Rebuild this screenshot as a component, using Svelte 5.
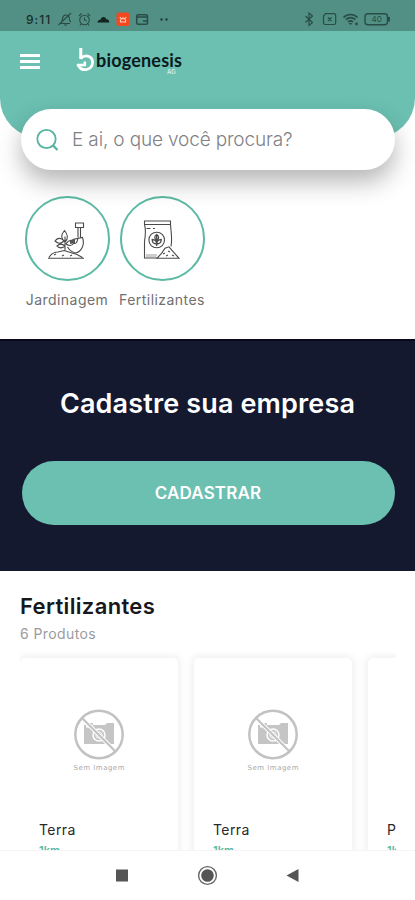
<script>
  const products = [
    { name: 'Terra', distance: '1km' },
    { name: 'Terra', distance: '1km' },
    { name: 'P', distance: '1km' }
  ];
</script>

<div class="screen">
  <header>
    <div class="status">
      <span class="time">9:11</span>
      <svg class="left-icons" width="120" height="20" viewBox="58 10 120 20" fill="none" stroke="#284d47" stroke-width="1.1">
        <path d="M60.5 23.5h9.5M61.5 22c1-1 1-2.500 1.200-4 .3-2 2-3.200 3.500-3 2 .2 3 1.500 3.100 3.200 0 2 .3 3 1.500 4M58.500 25l12.500-12M64 25h3" />
        <circle cx="84.500" cy="20" r="4.800" /><path d="M84.500 17.500V20l2 1M79 16l2.500-2.500M90 16l-2.500-2.500M81 24l-1 1.500M88 24l1 1.500" />
        <path d="M97.500 22.500c.2-2 1.400-3 3-2.800 1-3.600 5-3.300 5.700-.5 1.900-.2 2.900.9 3.100 3.300Z" fill="#13231f" stroke="none" />
        <rect x="116.500" y="12.500" width="13" height="13.500" rx="2.500" fill="#f4481e" stroke="none" />
        <path d="m119.800 17 1.700 2 1.500-1 1.500 1 1.700-2M120.500 19.500v2.500h5v-2.500" stroke="#ffd0c0" />
        <rect x="136.700" y="14.700" width="10.800" height="9.600" rx="1.500" stroke-width="1.500" /><path d="M137 17h10M143 21h4" stroke-width="1.500" />
        <path d="M160.500 19.500h2M165.500 19.500h2" stroke="#172f2a" stroke-width="2" />
      </svg>
      <svg class="right-icons" width="90" height="20" viewBox="302 10 90 20" fill="none" stroke="#284d47" stroke-width="1.200">
        <path d="m305.500 16 7 6.500-3.500 3V13l3.500 3-7 6.500" />
        <path d="M325.500 13.700h8.500q1.700 0 1.700 1.700v7.400q0 1.700-1.700 1.700h-8.800q-1.700 0-1.700-1.700v-6.500ZM328 17.500l3.500 3.500M331.500 17.500l-3.500 3.500" />
        <path d="M343.500 17.500c4-4 10-4 14 0M345.800 19.700c3-2.700 6.600-2.700 9.600 0M348 22c1.500-1.400 3.500-1.400 5 0" stroke-width="1.700" /><path d="m348.500 23 2 2 2-2Z" fill="#284d47" stroke="none" /><circle cx="356.500" cy="24" r=".8" />
        <rect x="365" y="13.700" width="22.500" height="11" rx="3" stroke-width="1.400" /><path d="M389 17v4.500" stroke-width="2" />
        <text x="371.500" y="22.300">40</text>
      </svg>
    </div>
    <div class="bar">
      <div class="menu"><i></i><i></i><i></i></div>
      <div class="logo">
        <svg width="20" height="28" viewBox="76 46 20 28" fill="none" stroke="#fff"><path d="M80.800 48v11" stroke-width="3" /><path d="M80.500 58.500c6-5.500 12.500-1.500 12 4.500-.6 7-10.500 9.500-14 2.500" stroke-width="2.800" /><path d="M76.800 65h8v-3.500" stroke-width="2.600" /></svg>
        <div class="wordmark">
          <span class="brand">biogenesis</span>
          <span class="suffix">AG</span>
        </div>
      </div>
    </div>
  </header>

  <div class="search">
    <svg width="24" height="24" viewBox="0 0 24 24" fill="none" stroke="#55b39f" stroke-width="1.800"><circle cx="10.500" cy="11" r="9.200" /><path d="m17 17.500 4.500 4.500" stroke-width="2.300" /></svg>
    <span>E ai, o que você procura?</span>
  </div>

  <div class="categories">
    <div class="category">
      <div class="circle">
        <svg width="40" height="40" viewBox="48 217 40 40" fill="none" stroke="#4a4a4a" stroke-width="1.100">
          <path d="M49 256.200h36M50 255.500c2-3.500 5-5.500 9-5.500l6-1.500 8 2.500 5 1.500 5.500 3M55 253l2-1M63 254l2-1M71 254l2-1" />
          <path d="M66 248.500v-14M66 240c-4-3-4.500-7-.5-11.500 3.500 4 4 8.500.5 11.500M66 244c-3 2.500-6 2-8 0 2-2 5-2.500 8 0M65 239c-3-4-7-3-9 0 3 3 6 3 9 0M67 242c3-5 7-4 8-1-2 3-5 3-8 1" />
          <path d="M76.500 221h8v4.500h-8ZM79 225.500v10M81.500 225.500v10M73.500 237.500l10-2c2.500 7-1 14.500-7 15.500-4-1-6.500-3.500-8-6M79 236c-1 6-3 6-5 5" />
          <path d="M71 238l5-1v4l-5 1Z" fill="#555" stroke="none" />
        </svg>
      </div>
      <span class="c1">Jardinagem</span>
    </div>
    <div class="category">
      <div class="circle">
        <svg width="40" height="40" viewBox="143 217 40 40" fill="none" stroke="#4a4a4a" stroke-width="1.100">
          <path d="M145.500 219h26v3.500h-26ZM145.500 222.500c1.500 5 1 11 0 17v16.500h13M171.500 222.500c.5 8 2 14 .5 22M147.500 226.500h4M154 226.500h2" />
          <circle cx="157.700" cy="238" r="7.800" />
          <path d="M157.700 244v-11M157.700 238c-2.500-1-2.500-4 0-5.500 2.500 1.500 2.500 4.500 0 5.500M157.700 242c-2.500 0-4.500-1.500-4.500-4.500 2.500 0 4.500 2 4.500 4.500M157.700 242c2.500 0 4.500-1.500 4.500-4.500-2.500 0-4.500 2-4.500 4.500" stroke-width="1.300" />
          <path d="M158 256.300h22l-7-8-3-3.500-4 1.500-3.500 5ZM164 252l2-1M169 249l2 1M167 254l2-1M173 253l2 1" /><path d="M147 253h11M147 255h10" stroke="#999" />
        </svg>
      </div>
      <span class="c2">Fertilizantes</span>
    </div>
  </div>

  <section class="banner">
    <h1>Cadastre sua empresa</h1>
    <button>CADASTRAR</button>
  </section>

  <section class="products">
    <h2>Fertilizantes</h2>
    <p>6 Produtos</p>
    <div class="carousel">
      {#each products as product}
        <article>
          <svg class="photo" width="52" height="64" viewBox="0 0 52 64">
            <path d="M11 17h3v-2h6v2h12l2-2h7v21H11Z" fill="#c5c5c5" />
            <path d="M13 18.500h7" stroke="#fff" stroke-width="2" />
            <circle cx="26" cy="27" r="6" fill="#c5c5c5" stroke="#fff" stroke-width="1.500" /><circle cx="26" cy="27" r="3.200" fill="none" stroke="#f4f4f4" />
            <path d="m10.500 11.500 31 31" stroke="#fff" stroke-width="4" /><path d="m9 10 34 34" stroke="#c2c2c2" stroke-width="2.200" />
            <circle cx="26" cy="26.500" r="23.700" fill="none" stroke="#c2c2c2" stroke-width="2.500" />
            <text x="0.500" y="62" textLength="51">Sem Imagem</text>
          </svg>
          <div class="name">{product.name}</div>
          <div class="distance">{product.distance}</div>
        </article>
      {/each}
    </div>
  </section>

  <nav>
    <svg width="415" height="49" viewBox="0 851 415 49">
      <rect x="116" y="869.500" width="12" height="12" fill="#555" />
      <circle cx="207.500" cy="875.500" r="8.900" fill="none" stroke="#666" stroke-width="1.400" /><circle cx="207.500" cy="875.500" r="6.300" fill="#555" />
      <path d="m286.500 875.500 12-6.500v13Z" fill="#555" />
    </svg>
  </nav>
</div>

<style>
  :global(body) { margin: 0; background: #fff; }
  .screen { width: 415px; height: 900px; overflow: hidden; display: flex; flex-direction: column; background: #fff; font-family: Inter, 'Liberation Sans', sans-serif; }
  header { height: 138px; flex: none; background: #6bc0b1; border-radius: 0 0 40px 40px; }
  .status { height: 31px; display: flex; align-items: center; padding: 8px 23px 0 26px; box-sizing: border-box; background: #528f84; }
  .time { font-size: 12px; font-weight: 500; letter-spacing: 1px; width: 32px; color: #172f2a; white-space: nowrap; }
  .right-icons { margin-left: auto; }
  .right-icons text { font-size: 8px; font-family: Inter, sans-serif; fill: #284d47; stroke: none; }
  .bar { display: flex; align-items: flex-start; padding: 15px 20px 0; }
  .menu { width: 20px; display: flex; flex-direction: column; gap: 3.500px; margin-top: 8px; }
  .menu i { height: 2.500px; background: #fff; }
  .logo { margin-left: 36px; display: flex; }
  .wordmark { display: flex; flex-direction: column; padding-top: 5px; }
  .brand { font: 700 18px/19px Lato, sans-serif; letter-spacing: .2px; color: #0c1b20; }
  .suffix { margin: -1px 0 0 71px; font-size: 6px; line-height: 6px; font-weight: 600; color: #d3eee8; }
  .search { position: relative; flex: none; width: 374px; height: 61px; margin: -29px 0 0 21px; padding-left: 15px; box-sizing: border-box; border-radius: 31px; background: #fff; box-shadow: 0 12px 24px rgba(0,0,0,.29); display: flex; align-items: center; gap: 12px; color: #818185; font-size: 19px; white-space: nowrap; }
  .search span { font-weight: 300; letter-spacing: -.15px; }
  .categories { display: flex; gap: 11px; padding: 26px 25px 0; height: 143px; flex: none; }
  .category { width: 84px; display: flex; flex-direction: column; align-items: center; }
  .circle { width: 85px; height: 85px; box-sizing: border-box; border: 2px solid #5cb9a4; border-radius: 50%; display: grid; place-items: center; }
  .category span { font-size: 14px; line-height: 18px; margin-top: 10px; color: #707070; white-space: nowrap; }
  .category .c1 { letter-spacing: .45px; }
  .category .c2 { letter-spacing: .45px; }
  .banner { height: 232px; box-sizing: border-box; flex: none; background: #14192f; border-top: 2px solid #080a1c; display: flex; flex-direction: column; align-items: center; }
  h1 { margin: 46px 0 0; font-size: 27px; line-height: 34px; font-weight: 600; letter-spacing: .15px; color: #fff; white-space: nowrap; }
  button { margin: 40px 0 0 1px; width: 373px; height: 64px; border: 0; border-radius: 32px; background: #6bc0b1; color: #fff; font: 600 17px Inter, sans-serif; letter-spacing: .15px; padding: 0; }
  .products { padding: 22px 19px 0 20px; height: 280px; box-sizing: border-box; flex: none; }
  h2 { margin: 0; font-size: 22px; line-height: 27px; font-weight: 600; letter-spacing: .35px; color: #18181c; white-space: nowrap; }
  p { margin: 5px 0 0; font-size: 14px; line-height: 18px; letter-spacing: .4px; color: #9b9b9f; }
  .carousel { margin-top: 9px; height: 199px; padding-top: 6px; box-sizing: border-box; overflow: hidden; display: flex; gap: 16px; }
  article { flex: none; width: 158px; height: 250px; border-radius: 5px; background: #fff; box-shadow: 0 0 8px 2px rgba(0,0,0,.065); box-sizing: border-box; padding: 50px 19px 0; }
  .photo { display: block; margin: 0 auto; }
  .photo text { font-family: 'DejaVu Sans', sans-serif; font-size: 7px; fill: #aaa; }
  .name { margin-top: 49px; font-size: 14px; line-height: 18px; letter-spacing: .4px; color: #29292b; }
  .distance { margin-top: 4px; font-size: 11px; line-height: 14px; font-weight: 600; color: #56b6a1; }
  nav { height: 49px; background: #fff; box-shadow: 0 -1px #f4f4f4; position: relative; }
  nav svg { display: block; }
</style>
